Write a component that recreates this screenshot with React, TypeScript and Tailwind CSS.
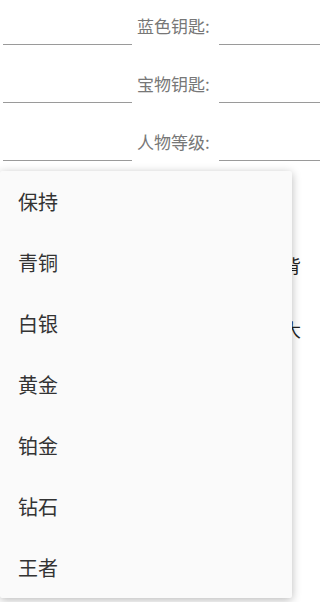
import React from "react";

const fields = ["蓝色钥匙:", "宝物钥匙:", "人物等级:"];
const levels = ["保持", "青铜", "白银", "黄金", "铂金", "钻石", "王者"];

function FieldRow({ label }: { label: string }) {
  return (
    <div className="flex items-end">
      <div className="ml-[3px] h-px w-[129px] bg-[#9a9a9a]" />
      <span className="mb-[9px] ml-[5px] w-[82px] shrink-0 text-[17px] leading-[20px] text-[#777777]">
        {label}
      </span>
      <div className="h-px flex-1 bg-[#9a9a9a]" />
    </div>
  );
}

export default function App() {
  return (
    <div
      className="relative h-[602px] w-full overflow-hidden bg-white"
      style={{ fontFamily: '"Noto Sans CJK SC", "Noto Sans", sans-serif' }}
    >
      <div className="flex flex-col gap-[29px] pt-[16px]">
        {fields.map((f) => (
          <FieldRow key={f} label={f} />
        ))}
      </div>

      {/* content under the open menu */}
      <div className="flex flex-col gap-[44px] pl-[283px] pt-[94px] text-[18px] leading-[20px] text-[#222222]">
        <span>背</span>
        <span>大</span>
      </div>

      {/* dropdown */}
      <ul className="absolute left-0 top-[171px] w-[292px] rounded-[2px] bg-[#fafafa] shadow-[0_2px_10px_rgba(0,0,0,0.28)]">
        {levels.map((l) => (
          <li
            key={l}
            className="flex h-[61px] items-center pl-[18px] text-[20px] text-[#333333]"
          >
            {l}
          </li>
        ))}
      </ul>
    </div>
  );
}
